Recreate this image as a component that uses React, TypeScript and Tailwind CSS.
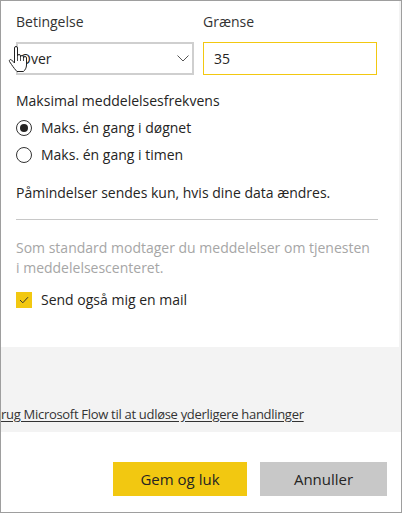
import React from 'react';

const HandCursor: React.FC = () => (
  <svg className="absolute left-[8px] top-[45px]" width="21" height="28" viewBox="0 0 21 28">
    <path
      d="M6.5 15V3a1.5 1.5 0 0 1 3 0v8a1.5 1.5 0 0 1 3 0v1a1.5 1.5 0 0 1 3 0v1a1.5 1.5 0 0 1 3 0v7c0 3-1.5 5-3 6.5H9c-1.5-1.5-3.5-4-5.5-7l-2-3a1.3 1.3 0 0 1 2-1.6L6.5 18Z"
      fill="#fff"
      stroke="#222"
      strokeWidth="1"
      strokeLinejoin="round"
    />
    <path d="M9.5 11v5M12.5 12v4M15.5 13v3" stroke="#222" strokeWidth="0.8" />
  </svg>
);

export default function App() {
  return (
    <div className="w-[402px] h-[513px] flex flex-col border border-[#9e9e9e] bg-[#f3f3f3] text-[#252423] font-['Open_Sans','Liberation_Sans',sans-serif] text-[14px] overflow-hidden">
      {/* settings panel */}
      <div className="h-[346px] shrink-0 bg-white mr-[2px] pl-[15px] pr-[21px] pt-[11px] flex flex-col">
        <div className="flex gap-[9px]">
          <div className="w-[178px] flex flex-col">
            <span className="leading-5 text-[#333]">Betingelse</span>
            <div className="relative mt-[10px] h-[33px] border-2 border-[#cfcfcf] flex items-center justify-between pl-[2px] pr-[3px]">
              <span>Over</span>
              <svg width="12" height="7" viewBox="0 0 12 7" fill="none">
                <path d="M0.5 0.5L6 6L11.5 0.5" stroke="#555" strokeWidth="1" />
              </svg>
            </div>
          </div>
          <div className="w-[174px] flex flex-col">
            <span className="leading-5 text-[#333]">Grænse</span>
            <div className="mt-[10px] h-[33px] border border-[#f2c811] flex items-center pl-[10px]">
              <span>35</span>
            </div>
          </div>
        </div>

        <p className="mt-[16px] leading-5">Maksimal meddelelsesfrekvens</p>
        <div className="mt-[7px] flex flex-col gap-[7px]">
          <label className="flex items-center gap-[9px] h-5">
            <span className="w-4 h-4 rounded-full border border-[#333] flex items-center justify-center">
              <span className="w-2 h-2 rounded-full bg-[#252423]" />
            </span>
            <span className="leading-5">Maks. én gang i døgnet</span>
          </label>
          <label className="flex items-center gap-[9px] h-5">
            <span className="w-4 h-4 rounded-full border border-[#333]" />
            <span className="leading-5">Maks. én gang i timen</span>
          </label>
        </div>

        <p className="mt-[18px] leading-5">Påmindelser sendes kun, hvis dine data ændres.</p>
        <div className="mt-[16px] h-px bg-[#c8c8c8]" />

        <p className="mt-[18px] w-[356px] leading-5 text-[#a6a6a6]">
          Som standard modtager du meddelelser om tjenesten i meddelelsescenteret.
        </p>

        <label className="mt-[12px] flex items-center gap-[9px] h-5">
          <span className="w-4 h-4 bg-[#f2c811] flex items-center justify-center">
            <svg width="10" height="8" viewBox="0 0 10 8" fill="none">
              <path d="M1 4L3.8 6.8L9 1.2" stroke="#333" strokeWidth="1" />
            </svg>
          </span>
          <span className="leading-5">Send også mig en mail</span>
        </label>
      </div>

      {/* flow link band */}
      <div className="h-[85px] shrink-0 pt-[57px]">
        <a className="block -ml-[8px] leading-5 text-[13px] tracking-[-0.3px] underline underline-offset-2 text-[#333] whitespace-nowrap">
          Brug Microsoft Flow til at udløse yderligere handlinger
        </a>
      </div>

      {/* footer */}
      <div className="flex-1 bg-white flex justify-end items-start gap-[13px] pt-[30px] pr-[14px]">
        <button className="w-[134px] h-[34px] bg-[#f2c811] text-[#252423] text-[15px]">Gem og luk</button>
        <button className="w-[127px] h-[34px] bg-[#c8c8c8] text-[#252423] text-[15px]">Annuller</button>
      </div>

      <HandCursor />
    </div>
  );
}
